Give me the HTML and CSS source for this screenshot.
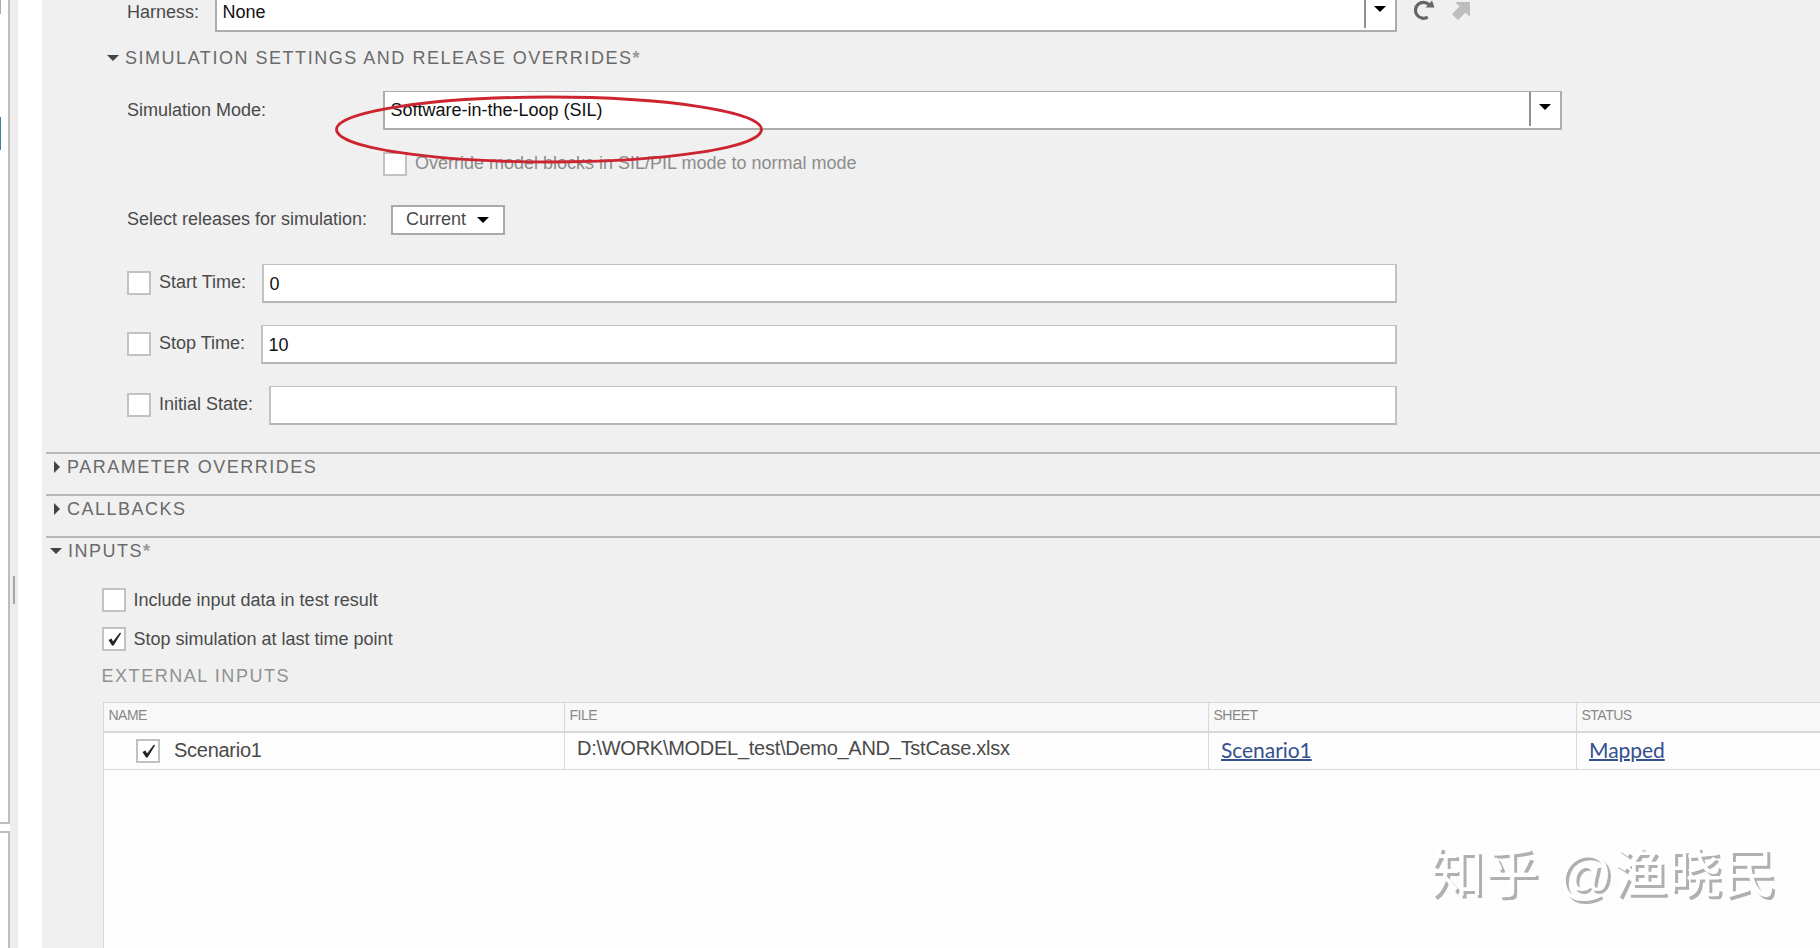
FILE: index.html
```html
<!DOCTYPE html>
<html lang="en">

<head>
    <meta charset="UTF-8">
    <meta name="viewport" content="width=device-width, initial-scale=1.0">
    <title>Test Manager</title>
    <link rel="stylesheet" href="styles.css">
</head>

<body>
    <div class="app">
        <div class="side">
            <div class="side-panel side-top">
                <div class="scroll-mark"></div>
                <div class="selected-mark"></div>
            </div>
            <div class="side-panel side-bottom"></div>
        </div>
        <div class="splitter">
            <div class="splitter-handle"></div>
        </div>

        <div class="main">
            <div class="settings">
                <div class="row harness-row">
                    <label class="harness-label">Harness:</label>
                    <div class="combo harness-combo">
                        <span class="combo-text">None</span>
                        <span class="combo-btn"><i class="arrow-down"></i></span>
                    </div>
                    <svg class="icon refresh" width="24" height="24" viewBox="0 0 24 24">
                        <path d="M15.8 18 A8 8 0 1 1 17 5.5" fill="none" stroke="#666" stroke-width="3.2" />
                        <path d="M22.5 8.5 H13.5 L20 1.5 Z" fill="#666" />
                    </svg>
                    <svg class="icon open" width="20" height="20" viewBox="0 0 20 20">
                        <path d="M4 1 H19 V16 L14.5 11.5 L7 19 L1 13 L8.5 5.5 Z" fill="#bdbdbd" />
                    </svg>
                </div>

                <div class="heading sim-heading"><i class="arrow-down dark"></i><span>SIMULATION SETTINGS AND RELEASE OVERRIDES<span class="star">*</span></span></div>

                <div class="row mode-row">
                    <label class="mode-label">Simulation Mode:</label>
                    <div class="combo mode-combo">
                        <span class="combo-text">Software-in-the-Loop (SIL)</span>
                        <span class="combo-btn"><i class="arrow-down"></i></span>
                    </div>
                </div>

                <div class="row override-row">
                    <span class="check"></span>
                    <label class="disabled">Override model blocks in SIL/PIL mode to normal mode</label>
                </div>

                <div class="row release-row">
                    <label class="release-label">Select releases for simulation:</label>
                    <div class="release-btn"><span>Current</span><i class="arrow-down"></i></div>
                </div>

                <div class="row time-row">
                    <span class="check"></span>
                    <label class="start-label">Start Time:</label>
                    <div class="text-box">0</div>
                </div>
                <div class="row time-row">
                    <span class="check"></span>
                    <label class="stop-label">Stop Time:</label>
                    <div class="text-box">10</div>
                </div>
                <div class="row time-row">
                    <span class="check"></span>
                    <label class="state-label">Initial State:</label>
                    <div class="text-box"></div>
                </div>
            </div>

            <div class="section">
                <div class="heading"><i class="arrow-right"></i><span>PARAMETER OVERRIDES</span></div>
            </div>
            <div class="section">
                <div class="heading"><i class="arrow-right"></i><span>CALLBACKS</span></div>
            </div>
            <div class="section inputs">
                <div class="heading"><i class="arrow-down dark"></i><span>INPUTS<span class="star">*</span></span></div>

                <div class="row include-row">
                    <span class="check"></span>
                    <label>Include input data in test result</label>
                </div>
                <div class="row stop-row">
                    <span class="check"><svg width="20" height="20" viewBox="0 0 20 20"><path d="M4.5 11 L7.5 9.5 L9 12.4 L16 3.5 L17 4.5 L9.6 16.5 L8 16.5 Z" fill="#222" /></svg></span>
                    <label>Stop simulation at last time point</label>
                </div>

                <div class="sub-heading">EXTERNAL INPUTS</div>

                <div class="table-container">
                    <div class="table-head">
                        <div>NAME</div>
                        <div>FILE</div>
                        <div>SHEET</div>
                        <div>STATUS</div>
                    </div>
                    <div class="table-row">
                        <div class="name-cell">
                            <span class="check"><svg width="20" height="20" viewBox="0 0 20 20"><path d="M4.5 11 L7.5 9.5 L9 12.4 L16 3.5 L17 4.5 L9.6 16.5 L8 16.5 Z" fill="#222" /></svg></span>
                            <span class="name-text">Scenario1</span>
                        </div>
                        <div class="file-cell">D:\WORK\MODEL_test\Demo_AND_TstCase.xlsx</div>
                        <div class="link-cell"><a href="#">Scenario1</a></div>
                        <div class="link-cell"><a href="#">Mapped</a></div>
                    </div>
                </div>
            </div>
        </div>
    </div>

    <svg class="marker" width="430" height="70" viewBox="0 0 430 70">
        <ellipse cx="215" cy="35.5" rx="212.5" ry="32.5" fill="none" stroke="#cc2530" stroke-width="2.8" />
    </svg>
    <div class="watermark">知乎 @渔晓民</div>
</body>

</html>
```
FILE: styles.css
```css
* {
    box-sizing: border-box;
}

body {
    margin: 0;
    height: 948px;
    overflow: hidden;
    font-family: "Liberation Sans", Arial, sans-serif;
    font-size: 18px;
    line-height: 24px;
    color: #4a4a4a;
    background: #fff;
    position: relative;
}

.app {
    display: flex;
    height: 948px;
}

/* left edge */
.side {
    width: 10px;
    display: flex;
    flex-direction: column;
    gap: 7px;
}

.side-panel {
    border-right: 2px solid #bdbdbd;
    background: #fff;
}

.side-top {
    height: 824px;
    border-bottom: 2px solid #bdbdbd;
}

.side-bottom {
    flex: 1;
    border-top: 2px solid #bdbdbd;
}

.scroll-mark {
    width: 1px;
    height: 14px;
    background: #aaa;
}

.selected-mark {
    width: 1px;
    height: 33px;
    margin-top: 103px;
    background: #3f7fae;
}

.splitter {
    width: 8px;
    padding: 576px 0 0 3px;
    background: #ededed;
}

.splitter-handle {
    width: 2px;
    height: 28px;
    background: #a6a6a6;
}

.main {
    flex: 1;
    min-width: 0;
    margin-left: 24px;
    padding-left: 4px;
    background: #f0f0f0;
    display: flex;
    flex-direction: column;
}

/* rows */
.settings {
    height: 452px;
    padding-left: 81px;
    flex-shrink: 0;
}

.row {
    display: flex;
    align-items: center;
}

.settings label {
    padding-bottom: 2px;
}

.check {
    width: 24px;
    height: 24px;
    border: 2px solid #c2c2c2;
    background: #fff;
    flex-shrink: 0;
    margin-right: 8px;
}

.check svg {
    display: block;
}

.combo,
.text-box {
    height: 39px;
    background: #fff;
    color: #111;
    padding-left: 5.5px;
}

.combo {
    display: flex;
    align-items: center;
    border: 2px solid #adadad;
    border-top-width: 1px;
}

.combo-text {
    flex: 1;
}

.combo-btn {
    width: 31px;
    height: 34px;
    margin-bottom: 2px;
    border-left: 2px solid #8f8f8f;
    display: flex;
    justify-content: center;
    padding: 12px 1px 0 0;
}

.arrow-down {
    border-left: 6px solid transparent;
    border-right: 6px solid transparent;
    border-top: 6px solid #000;
    height: 0;
}

.arrow-down.dark {
    border-top-color: #444;
    margin: 0 -1px 0 -1px;
}

.arrow-right {
    border-top: 6px solid transparent;
    border-bottom: 6px solid transparent;
    border-left: 6px solid #444;
    margin-left: 3px;
}

.harness-row {
    margin-top: -7px;
}

.harness-label {
    width: 88px;
}

.harness-combo {
    width: 1182px;
}

.icon {
    flex-shrink: 0;
    margin-bottom: 3px;
}

.refresh {
    margin-left: 15px;
}

.open {
    margin-left: 15px;
}

.heading {
    display: flex;
    align-items: center;
    gap: 7px;
    height: 24px;
    color: #6a6a6a;
    letter-spacing: 1.5px;
}

.star {
    color: #999;
    font-weight: bold;
}

.sim-heading {
    margin: 14px 0 0 -19px;
    letter-spacing: 1.53px;
}

.mode-row {
    margin-top: 21px;
}

.mode-label {
    width: 256px;
}

.mode-combo {
    width: 1179px;
}

.override-row {
    height: 24px;
    margin: 22px 0 0 256px;
}

.disabled {
    color: #8c8c8c;
}

.release-row {
    margin-top: 29px;
    margin-bottom: 29px;
}

.release-label {
    width: 264px;
}

.release-btn {
    width: 114px;
    height: 30px;
    padding-left: 13px;
    border: 2px solid #a9a9a9;
    background: #fff;
    display: flex;
    align-items: center;
    gap: 11px;
}

.release-btn span {
    padding-bottom: 2px;
}

.time-row {
    width: 1270px;
    margin-bottom: 22px;
}

.time-row .check {
    margin-bottom: 1px;
}

.time-row label {
    padding-bottom: 3px;
}

.text-box {
    flex: 1;
    line-height: 38px;
    border: 2px solid #c2c2c2;
    border-top-width: 1px;
    border-bottom-color: #b5b5b5;
}

.start-label {
    width: 103px;
}

.stop-label {
    width: 102px;
}

.state-label {
    width: 110px;
}

/* collapsible sections */
.section {
    height: 42px;
    flex-shrink: 0;
    border-top: 2px solid #b8b8b8;
    padding: 1px 0 0 5px;
}

.section.inputs {
    flex: 1;
    display: flex;
    flex-direction: column;
}

.include-row,
.stop-row {
    margin-left: 51px;
}

.inputs .row .check {
    margin-right: 7.5px;
}

.include-row {
    margin-top: 25px;
}

.stop-row {
    margin-top: 15px;
}

.sub-heading {
    margin: 13px 0 0 50.5px;
    color: #909090;
    letter-spacing: 1.55px;
}

.table-container {
    flex: 1;
    margin: 14px 0 0 52px;
    border-top: 1px solid #d8d8d8;
    border-left: 1px solid #d8d8d8;
    background: #fdfdfd;
}

.table-head,
.table-row {
    display: grid;
    grid-template-columns: 461px 644px 368px 1fr;
}

.table-head > div,
.table-row > div {
    border-right: 1px solid #d8d8d8;
}

.table-head > div:last-child,
.table-row > div:last-child {
    border-right: none;
}

.table-head {
    height: 30px;
    background: #f8f8f8;
    border-bottom: 2px solid #d8d8d8;
    font-size: 14px;
    letter-spacing: -0.5px;
    color: #888;
}

.table-head > div {
    padding-left: 4.5px;
}

.table-row {
    height: 37px;
    border-bottom: 1px solid #d8d8d8;
    font-size: 20px;
    letter-spacing: -0.27px;
}

.name-cell {
    display: flex;
    align-items: center;
    padding-left: 32px;
    gap: 6px;
}

.name-text {
    padding-bottom: 2px;
}

.file-cell {
    padding: 3px 0 0 12px;
}

.link-cell {
    padding: 5px 0 0 12px;
    font-family: Lato, sans-serif;
    font-size: 21px;
    letter-spacing: -0.05px;
}

.link-cell a {
    color: #34508f;
    text-decoration-thickness: 2px;
}

/* overlays */
.marker {
    position: absolute;
    left: 334px;
    top: 94px;
}

.watermark {
    position: absolute;
    left: 1430px;
    top: 839px;
    font-family: "Liberation Sans", "Noto Sans CJK SC", sans-serif;
    font-size: 54px;
    line-height: 70px;
    letter-spacing: 0.6px;
    word-spacing: 3px;
    color: #fff;
    white-space: nowrap;
    text-shadow: 3px 3px 0 #b0b0b0;
}
```
